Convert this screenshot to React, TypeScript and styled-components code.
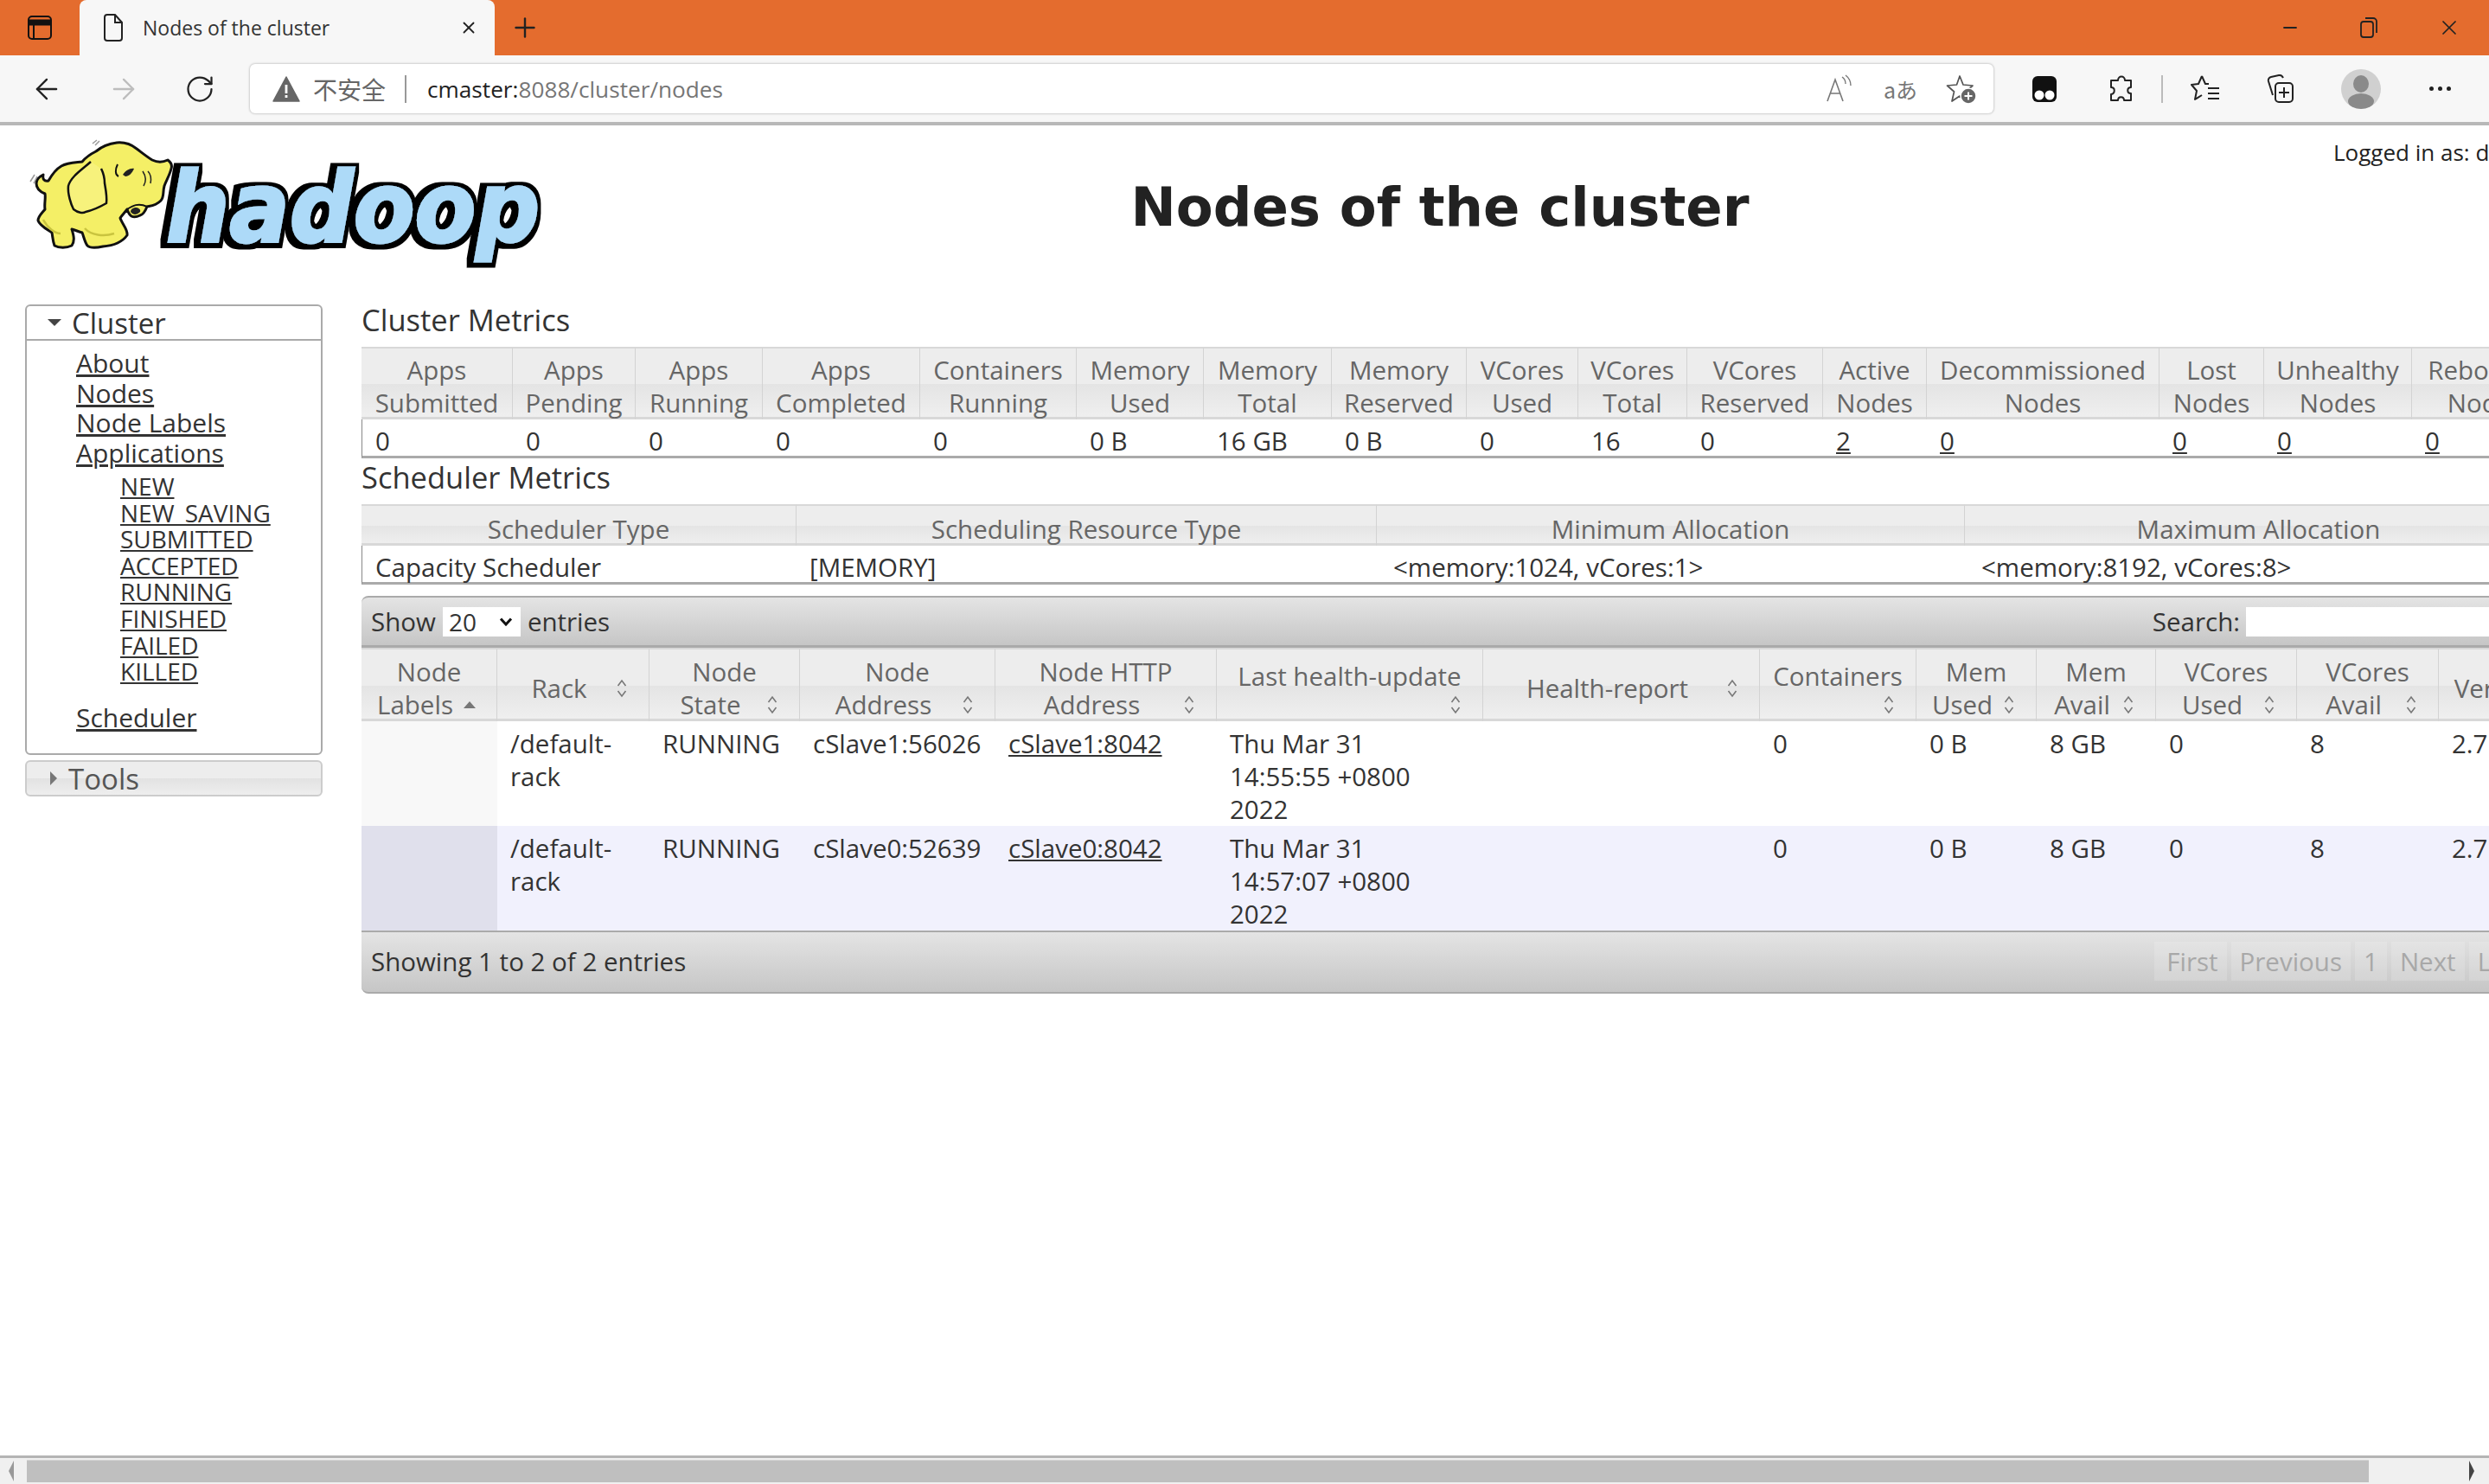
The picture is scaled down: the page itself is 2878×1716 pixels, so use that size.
import styled, { createGlobalStyle } from 'styled-components'
import { ArrowLeft, ArrowRight, RotateCw, Plus, X, Minus } from 'lucide-react'

const GlobalStyle = createGlobalStyle`
  html, body { margin: 0; padding: 0; height: 100%; overflow: hidden; background: #fff; }
  body { font-family: "Open Sans", "Noto Sans", "Noto Sans CJK SC", sans-serif; color: #333; }
  #root { height: 100%; }
  * { box-sizing: border-box; }
`

const metricHeads = [
  ['Apps', 'Submitted'], ['Apps', 'Pending'], ['Apps', 'Running'], ['Apps', 'Completed'],
  ['Containers', 'Running'], ['Memory', 'Used'], ['Memory', 'Total'], ['Memory', 'Reserved'],
  ['VCores', 'Used'], ['VCores', 'Total'], ['VCores', 'Reserved'], ['Active', 'Nodes'],
  ['Decommissioned', 'Nodes'], ['Lost', 'Nodes'], ['Unhealthy', 'Nodes'], ['Rebooted', 'Nodes'],
]
const metricWidths = [175, 142, 147, 182, 181, 147, 148, 156, 129, 126, 157, 120, 269, 121, 171, 171]
const metricValues: [string, boolean][] = [
  ['0', false], ['0', false], ['0', false], ['0', false], ['0', false], ['0 B', false], ['16 GB', false], ['0 B', false],
  ['0', false], ['16', false], ['0', false], ['2', true], ['0', true], ['0', true], ['0', true], ['0', true],
]

const schedHeads = ['Scheduler Type', 'Scheduling Resource Type', 'Minimum Allocation', 'Maximum Allocation']
const schedWidths = [503, 671, 680, 680]
const schedValues = ['Capacity Scheduler', '[MEMORY]', '<memory:1024, vCores:1>', '<memory:8192, vCores:8>']

const nodeHeads: { lines: string[]; sort: 'asc' | 'both' | 'none'; drop?: boolean }[] = [
  { lines: ['Node', 'Labels'], sort: 'asc' },
  { lines: ['Rack'], sort: 'both' },
  { lines: ['Node', 'State'], sort: 'both' },
  { lines: ['Node', 'Address'], sort: 'both' },
  { lines: ['Node HTTP', 'Address'], sort: 'both' },
  { lines: ['Last health-update'], sort: 'both', drop: true },
  { lines: ['Health-report'], sort: 'both' },
  { lines: ['Containers'], sort: 'both', drop: true },
  { lines: ['Mem', 'Used'], sort: 'both' },
  { lines: ['Mem', 'Avail'], sort: 'both' },
  { lines: ['VCores', 'Used'], sort: 'both' },
  { lines: ['VCores', 'Avail'], sort: 'both' },
  { lines: ['Version'], sort: 'none' },
]
const nodeWidths = [157, 176, 174, 226, 256, 308, 320, 181, 139, 138, 163, 164, 140]
const nodes = [
  { addr: 'cSlave1:56026', http: 'cSlave1:8042', time: '14:55:55' },
  { addr: 'cSlave0:52639', http: 'cSlave0:8042', time: '14:57:07' },
]

const appStates = ['NEW', 'NEW_SAVING', 'SUBMITTED', 'ACCEPTED', 'RUNNING', 'FINISHED', 'FAILED', 'KILLED']

function App() {
  return (
    <Screen>
      <GlobalStyle />
      <TitleBar>
        <TitleIcon>
          <svg width="30" height="30" viewBox="0 0 30 30" fill="none" stroke="#111" strokeWidth="2">
            <rect x="2" y="2" width="26" height="26" rx="4" />
            <path d="M2 9h26" strokeWidth="7" />
            <path d="M8 9v19" />
          </svg>
        </TitleIcon>
        <Tab>
          <svg width="24" height="32" viewBox="0 0 24 32" fill="none" stroke="#222" strokeWidth="2">
            <path d="M2 4a3 3 0 0 1 3-3h9l8 9v18a3 3 0 0 1-3 3H5a3 3 0 0 1-3-3z" />
            <path d="M14 1v9h8" />
          </svg>
          <TabTitle>Nodes of the cluster</TabTitle>
          <X size={22} color="#222" strokeWidth={2} />
        </Tab>
        <NewTab><Plus size={36} color="#222" strokeWidth={1.6} /></NewTab>
        <WindowControls>
          <Minus size={24} color="#222" strokeWidth={1.8} />
          <svg width="24" height="26" viewBox="0 0 24 26" fill="none" stroke="#222" strokeWidth="1.8">
            <rect x="3" y="6" width="14" height="18" rx="3" />
            <path d="M8 2h9a4 4 0 0 1 4 4v13" />
          </svg>
          <X size={28} color="#222" strokeWidth={1.5} />
        </WindowControls>
      </TitleBar>

      <Toolbar>
        <NavButtons>
          <ArrowLeft size={38} color="#222" strokeWidth={1.5} />
          <ArrowRight size={38} color="#bdbdbd" strokeWidth={1.5} />
          <RotateCw size={36} color="#222" strokeWidth={1.5} />
        </NavButtons>
        <AddressBar>
          <svg width="32" height="30" viewBox="0 0 32 30">
            <path d="M16 1 31 29H1z" fill="#666" stroke="#666" strokeLinejoin="round" strokeWidth="1.5" />
            <path d="M14.6 10h2.8v10h-2.8zM14.6 22h2.8v3h-2.8z" fill="#fff" />
          </svg>
          <Insecure>不安全</Insecure>
          <AddressDivider />
          <Url><b>cmaster:</b>8088/cluster/nodes</Url>
          <AddressIcons>
            <svg width="34" height="34" viewBox="0 0 34 34" fill="none" stroke="#777" strokeWidth="1.6">
              <path d="M2 31 11 6l9 25M5.500 22h11" />
              <path d="M19 3c3 2 4 5 4 8M23 1c4 3 6 7 6 12" strokeWidth="1.4" />
            </svg>
            <Translate>aあ</Translate>
            <svg width="36" height="36" viewBox="0 0 36 36" fill="none" stroke="#555" strokeWidth="1.7">
              <path d="M16 3l4 10 11 1-8 7 2.500 11L16 26 7 32l2.500-11-8-7 11-1z" strokeLinejoin="round" />
              <circle cx="26" cy="26" r="9" fill="#666" stroke="#fff" strokeWidth="1.5" />
              <path d="M26 21.500v9M21.500 26h9" stroke="#fff" strokeWidth="2" />
            </svg>
          </AddressIcons>
        </AddressBar>
        <Extensions>
          <svg width="28" height="30" viewBox="0 0 28 30">
            <path d="M6 0h16a6 6 0 0 1 6 6v18a6 6 0 0 1-6 6H6a6 6 0 0 1-6-6V6a6 6 0 0 1 6-6z" fill="#111" />
            <circle cx="8" cy="22" r="5.500" fill="#fff" />
            <circle cx="20" cy="22" r="5.500" fill="#fff" />
          </svg>
          <PuzzleIcon width="32" height="32" viewBox="0 0 32 32" fill="none" stroke="#222" strokeWidth="2" strokeLinejoin="round">
            <path d="M12 6c0-6 8-6 8 0h7v8c-5 0-5 7 0 7v8h-8c0-5-7-5-7 0H4v-7c5-1 5-8 0-8V6z" />
          </PuzzleIcon>
          <ToolbarDivider />
          <svg width="34" height="34" viewBox="0 0 34 34" fill="none" stroke="#222" strokeWidth="2" strokeLinejoin="round">
            <path d="M13 2l4 9h4M13 2 9 11l-8 1 6 7-2 10 8-5" />
            <path d="M20 16h13M20 22h13M20 28h13" />
          </svg>
          <svg width="34" height="34" viewBox="0 0 34 34" fill="none" stroke="#222" strokeWidth="2">
            <path d="M7 24 2 8a4 4 0 0 1 3-5l9-2a5 5 0 0 1 5 3" />
            <rect x="10" y="10" width="20" height="22" rx="4" />
            <path d="M20 15v12M14 21h12" />
          </svg>
          <Avatar>
            <svg width="46" height="46" viewBox="0 0 46 46">
              <circle cx="23" cy="23" r="23" fill="#d0d0d0" />
              <ellipse cx="23" cy="17" rx="9" ry="10" fill="#8a8a8a" />
              <ellipse cx="23" cy="37" rx="15" ry="9" fill="#8a8a8a" />
            </svg>
          </Avatar>
          <MoreDots>
            <span /><span /><span />
          </MoreDots>
        </Extensions>
      </Toolbar>

      <Page>
        <PageInner>
          <Header>
            <HadoopLogo />
            <Title>Nodes of the cluster</Title>
            <LoggedIn>Logged in as: dr.who</LoggedIn>
          </Header>

          <Main>
            <Sidebar>
              <ClusterBox>
                <PanelHead>
                  <TriangleDown />
                  Cluster
                </PanelHead>
                <NavList>
                  <li><NavLink href="#">About</NavLink></li>
                  <li><NavLink href="#">Nodes</NavLink></li>
                  <li><NavLink href="#">Node Labels</NavLink></li>
                  <li><NavLink href="#">Applications</NavLink></li>
                </NavList>
                <SubList>
                  {appStates.map(s => <li key={s}><NavLink href="#">{s}</NavLink></li>)}
                </SubList>
                <NavList>
                  <li><NavLink href="#">Scheduler</NavLink></li>
                </NavList>
              </ClusterBox>
              <ToolsBox>
                <TriangleRight />
                Tools
              </ToolsBox>
            </Sidebar>

            <Content>
              <Heading>Cluster Metrics</Heading>
              <InfoTable $width={2542}>
                <colgroup>{metricWidths.map((w, i) => <col key={i} width={w} />)}</colgroup>
                <thead>
                  <tr>{metricHeads.map((h, i) => <HeadCell key={i}>{h[0]}<br />{h[1]}</HeadCell>)}</tr>
                </thead>
                <tbody>
                  <tr>
                    {metricValues.map(([v, link], i) => <InfoCell key={i}>{link ? <PlainLink href="#">{v}</PlainLink> : v}</InfoCell>)}
                  </tr>
                </tbody>
              </InfoTable>

              <SecondHeading>Scheduler Metrics</SecondHeading>
              <InfoTable $width={2534}>
                <colgroup>{schedWidths.map((w, i) => <col key={i} width={w} />)}</colgroup>
                <thead>
                  <tr>{schedHeads.map(h => <SchedHeadCell key={h}>{h}</SchedHeadCell>)}</tr>
                </thead>
                <tbody>
                  <tr>{schedValues.map(v => <SchedCell key={v}>{v}</SchedCell>)}</tr>
                </tbody>
              </InfoTable>

              <NodesWrap>
                <TableBar $top>
                  <ShowEntries>
                    Show
                    <EntrySelect>
                      20
                      <svg width="16" height="10" viewBox="0 0 16 10" fill="none" stroke="#111" strokeWidth="3">
                        <path d="M2 1.500 8 8l6-6.500" />
                      </svg>
                    </EntrySelect>
                    entries
                  </ShowEntries>
                  <SearchBox>
                    Search:
                    <SearchInput />
                  </SearchBox>
                </TableBar>

                <NodesTable>
                  <colgroup>{nodeWidths.map((w, i) => <col key={i} width={w} />)}</colgroup>
                  <thead>
                    <tr>
                      {nodeHeads.map((h, i) => (
                        <NodeHead key={i}>
                          {h.drop ? <DroppedLine>{h.lines[0]}</DroppedLine> : h.lines[0]}
                          {h.lines[1] && <br />}{h.lines[1]}
                          {h.sort !== 'none' && <SortIcon kind={h.sort} />}
                        </NodeHead>
                      ))}
                    </tr>
                  </thead>
                  <tbody>
                    {nodes.map((n, i) => (
                      <NodeRow key={n.addr} $alt={i === 1}>
                        <LabelCell $alt={i === 1} />
                        <NodeCell>/default-<br />rack</NodeCell>
                        <NodeCell>RUNNING</NodeCell>
                        <NodeCell>{n.addr}</NodeCell>
                        <NodeCell><PlainLink href="#">{n.http}</PlainLink></NodeCell>
                        <NodeCell>Thu Mar 31<br />{n.time} +0800<br />2022</NodeCell>
                        <NodeCell />
                        <NodeCell>0</NodeCell>
                        <NodeCell>0 B</NodeCell>
                        <NodeCell>8 GB</NodeCell>
                        <NodeCell>0</NodeCell>
                        <NodeCell>8</NodeCell>
                        <NodeCell>2.7.3</NodeCell>
                      </NodeRow>
                    ))}
                  </tbody>
                </NodesTable>

                <TableBar>
                  <span>Showing 1 to 2 of 2 entries</span>
                  <Pager>
                    <PageButton>First</PageButton>
                    <PageButton>Previous</PageButton>
                    <PageButton>1</PageButton>
                    <PageButton>Next</PageButton>
                    <PageButton>Last</PageButton>
                  </Pager>
                </TableBar>
              </NodesWrap>
            </Content>
          </Main>
        </PageInner>
      </Page>

      <ScrollBar>
        <ScrollArrow viewBox="0 0 8 24"><path d="M7 0v24L1 12z" fill="#999" /></ScrollArrow>
        <ScrollThumb />
        <ScrollArrow viewBox="0 0 8 24"><path d="M1 0v24l6-12z" fill="#444" /></ScrollArrow>
      </ScrollBar>
    </Screen>
  )
}

function HadoopLogo() {
  return (
    <LogoBox>
      <svg width="620" height="160" viewBox="0 0 620 160">
        <defs>
          <filter id="logoOutline" x="-5%" y="-10%" width="110%" height="120%">
            <feMorphology in="SourceAlpha" operator="dilate" radius="6 5" result="fat" />
            <feOffset in="fat" dx="-2" dy="1" result="shifted" />
            <feFlood floodColor="#000" />
            <feComposite in2="shifted" operator="in" result="edge" />
            <feMerge>
              <feMergeNode in="edge" />
              <feMergeNode in="SourceGraphic" />
            </feMerge>
          </filter>
        </defs>
        <text
          x="172" y="127" fontFamily="'DejaVu Sans', sans-serif" fontWeight="bold" fontStyle="italic" fontSize="112"
          textLength="432" lengthAdjust="spacingAndGlyphs" fill="#ADDAF8" stroke="#ADDAF8" strokeWidth="3"
          filter="url(#logoOutline)"
        >hadoop</text>
        <path
          d="M115 13C126 12 133 16 138 20C146 26 151 30 156 33C162 36 168 36 174 33C178 36 179 40 178 43C176 51 172 57 170 63C168 70 170 76 166 80C160 86 155 86 150 87C148 92 146 96 142 97C138 99 134 99 132 98C129 96 128 93 127 90C124 94 121 97 119 100C121 107 128 113 127 120C122 127 112 132 99 133C90 135 84 135 81 132C78 128 77 122 75 117C71 116 67 114 63 113C65 120 67 126 63 132C57 135 48 135 43 132C41 127 41 122 40 117C34 113 26 109 24 103C24 98 29 94 32 90C31 84 33 77 32 72C27 70 22 66 22 60C22 55 26 52 30 50C29 55 31 58 36 57C40 50 44 44 51 40C58 36 67 36 75 35C80 29 85 26 91 23C97 18 106 14 115 13Z"
          fill="#F4EF66" stroke="#111" strokeWidth="3" strokeLinejoin="round"
        />
        <path d="M85 35C75 44 62 52 59 63C58 72 62 84 65 90C70 94 76 95 79 93C88 91 96 87 103 83C104 75 102 66 101 60C101 52 99 47 97 43" fill="#F7F27C" stroke="#111" strokeWidth="2.500" strokeLinejoin="round" />
        <path d="M127 90C133 86 140 82 150 87" fill="none" stroke="#111" strokeWidth="2" />
        <path d="M131 93C134 97 138 97 142 93C143 90 140 88 136 88C133 89 131 90 131 93Z" fill="#222" />
        <path d="M116 38C113 44 113 50 117 52" fill="none" stroke="#111" strokeWidth="2" />
        <path d="M122 50C125 45 131 42 135 43C133 48 129 52 125 52Z" fill="#222" />
        <path d="M145 46C149 52 149 58 146 63M151 46C155 50 155 55 154 60" fill="none" stroke="#222" strokeWidth="1.500" />
        <path d="M30 102C35 112 44 118 50 118M78 112C85 120 100 122 112 118" fill="none" stroke="#C9C43F" strokeWidth="2.500" />
        <path d="M90 16 95 11M87 14 92 10M15 58 20 50M19 60 23 52" stroke="#999" strokeWidth="1.500" />
      </svg>
    </LogoBox>
  )
}

function SortIcon({ kind }: { kind: 'asc' | 'both' }) {
  return (
    <SortBox>
      {kind === 'asc' ? (
        <svg width="16" height="10" viewBox="0 0 16 10"><path d="M8 1l7 8H1z" fill="#777" /></svg>
      ) : (
        <svg width="12" height="22" viewBox="0 0 12 22" fill="none" stroke="#777" strokeWidth="1.600">
          <path d="M1.500 8 6 2l4.500 6M1.500 14 6 20l4.500-6" />
        </svg>
      )}
    </SortBox>
  )
}

const Screen = styled.div`
  height: 100vh;
  display: flex;
  flex-direction: column;
  overflow: hidden;
`

const TitleBar = styled.div`
  height: 64px;
  flex: none;
  background: #e46c2e;
  display: flex;
  align-items: stretch;
`

const TitleIcon = styled.div`
  width: 92px;
  display: flex;
  align-items: center;
  justify-content: center;
`

const Tab = styled.div`
  width: 480px;
  background: #f7f7f7;
  border-radius: 8px 8px 0 0;
  display: flex;
  align-items: center;
  padding: 0 19px 0 27px;
`

const TabTitle = styled.span`
  flex: 1;
  margin-left: 22px;
  font-size: 23px;
  color: #333;
  white-space: nowrap;
`

const NewTab = styled.div`
  width: 70px;
  display: flex;
  align-items: center;
  justify-content: center;
`

const WindowControls = styled.div`
  margin-left: auto;
  width: 242px;
  padding: 0 32px 0 0;
  display: flex;
  align-items: center;
  justify-content: space-between;
`

const Toolbar = styled.div`
  height: 81px;
  flex: none;
  background: #f7f7f7;
  border-bottom: 4px solid #b8b8b8;
  display: flex;
  align-items: flex-start;
  padding-top: 10px;
`

const NavButtons = styled.div`
  width: 289px;
  height: 57px;
  padding: 0 40px 0 35px;
  display: flex;
  align-items: center;
  justify-content: space-between;
`

const AddressBar = styled.div`
  width: 2016px;
  height: 57px;
  background: #fff;
  border-radius: 6px;
  box-shadow: 0 0 2px 1px #cfcfcf;
  display: flex;
  align-items: center;
  padding: 0 19px 0 26px;
`

const Insecure = styled.span`
  margin-left: 15px;
  font-size: 28px;
  color: #666;
  font-family: "Noto Sans CJK SC", sans-serif;
`

const AddressDivider = styled.span`
  width: 2px;
  height: 32px;
  background: #999;
  margin: 0 24px 0 22px;
`

const Url = styled.span`
  font-size: 26.200px;
  color: #767676;
  white-space: nowrap;
  & > b {
    font-weight: 400;
    color: #222;
  }
`

const AddressIcons = styled.div`
  margin-left: auto;
  display: flex;
  align-items: center;
  gap: 33px;
`

const Translate = styled.span`
  font-size: 25px;
  color: #777;
  font-family: "Noto Sans CJK SC", sans-serif;
`

const Extensions = styled.div`
  flex: 1;
  height: 57px;
  display: flex;
  align-items: center;
  padding-left: 45px;
  gap: 54px;
`

const PuzzleIcon = styled.svg`
  margin-left: 5px;
`

const ToolbarDivider = styled.span`
  width: 2px;
  height: 32px;
  background: #bbb;
  margin: 0 -22px 0 -24px;
`

const Avatar = styled.div`
  display: flex;
  margin-left: -2px;
`

const MoreDots = styled.div`
  display: flex;
  gap: 5px;
  margin-left: 2px;
  & > span {
    width: 5px;
    height: 5px;
    border-radius: 50%;
    background: #222;
  }
`

const Page = styled.div`
  flex: 1;
  overflow: hidden;
  background: #fff;
`

const PageInner = styled.div`
  width: 3030px;
`

const Header = styled.div`
  height: 207px;
  display: grid;
  grid-template-columns: 640px 2050px 1fr;
`

const LogoBox = styled.div`
  padding: 7px 0 0 20px;
  & > svg { display: block; }
`

const Title = styled.h1`
  margin: 0;
  text-align: center;
  font-family: "DejaVu Sans", sans-serif;
  font-weight: 700;
  font-size: 62.500px;
  line-height: 190px;
  color: #222;
  white-space: nowrap;
`

const LoggedIn = styled.div`
  padding: 14px 0 0 8px;
  font-size: 26px;
  line-height: 34px;
  color: #222;
  white-space: nowrap;
`

const Main = styled.div`
  display: flex;
  align-items: flex-start;
  padding-left: 29px;
`

const Sidebar = styled.div`
  width: 344px;
  flex: none;
  display: flex;
  flex-direction: column;
  gap: 6px;
`

const ClusterBox = styled.div`
  height: 521px;
  border: 2px solid #aaa;
  border-radius: 6px;
`

const PanelHead = styled.div`
  height: 40px;
  border-bottom: 2px solid #aaa;
  display: flex;
  align-items: center;
  padding-left: 24px;
  font-size: 33px;
  color: #333;
`

const TriangleDown = styled.span`
  width: 0;
  height: 0;
  border: 8px solid transparent;
  border-top: 8px solid #444;
  border-bottom: 0;
  margin-right: 12px;
`

const TriangleRight = styled.span`
  width: 0;
  height: 0;
  border: 8px solid transparent;
  border-left: 8px solid #777;
  border-right: 0;
  margin-right: 13px;
`

const ToolsBox = styled.div`
  height: 42px;
  border: 2px solid #ccc;
  border-radius: 6px;
  background: linear-gradient(#ededed 0 50%, #e2e2e2 50%, #eee 100%);
  display: flex;
  align-items: center;
  padding-left: 27px;
  font-size: 33px;
  color: #555;
`

const NavList = styled.ul`
  list-style: none;
  margin: 0;
  padding: 9px 0 0 57px;
  font-size: 30px;
  line-height: 34.500px;
`

const SubList = styled.ul`
  list-style: none;
  margin: 0;
  padding: 6px 0 12px 108px;
  font-size: 28px;
  line-height: 30.600px;
`

const NavLink = styled.a`
  display: inline-block;
  vertical-align: top;
  color: #333;
  text-decoration: underline;
`

const PlainLink = styled.a`
  color: #333;
  text-decoration: underline;
`

const Content = styled.div`
  margin-left: 45px;
  width: 2542px;
  flex: none;
`

const Heading = styled.h3`
  margin: 0;
  height: 49px;
  font-size: 34.500px;
  font-weight: 400;
  line-height: 36px;
  color: #333;
`

const SecondHeading = styled(Heading)`
  height: 53px;
  line-height: 44px;
`

const InfoTable = styled.table<{ $width: number }>`
  width: ${({ $width }) => $width}px;
  table-layout: fixed;
  border-collapse: separate;
  border-spacing: 0;
  font-size: 29.500px;
  line-height: 38px;
`

const HeadCell = styled.th`
  height: 84px;
  padding: 6px 0 0;
  font-weight: 400;
  color: #666;
  text-align: center;
  white-space: nowrap;
  background: linear-gradient(#ededed 0 50%, #e4e4e4 50%, #f0f0f0 100%);
  border-top: 2px solid #d8d8d8;
  border-right: 1px solid #d3d3d3;
  box-shadow: inset 0 -3px 0 #d8d8d8;
`

const SchedHeadCell = styled(HeadCell)`
  height: 48px;
  padding-top: 7px;
`

const InfoCell = styled.td`
  height: 45px;
  padding: 8px 0 0 15px;
  line-height: 30px;
  color: #333;
  white-space: nowrap;
  border-bottom: 3px solid #aaa;
  &:first-child { border-left: 1px solid #888; }
`

const SchedCell = styled(InfoCell)`
  &:nth-child(n + 3) { padding-left: 19px; }
`

const NodesWrap = styled.div`
  margin-top: 13px;
`

const TableBar = styled.div<{ $top?: boolean }>`
  height: ${({ $top }) => ($top ? '60px' : '73px')};
  background: linear-gradient(#e4e4e4, #c6c6c6);
  border: 1px solid #aaa;
  border-width: ${({ $top }) => ($top ? '2px 0 3px 0' : '2px 0 2px 0')};
  border-radius: ${({ $top }) => ($top ? '8px 0 0 0' : '0 0 0 8px')};
  display: flex;
  align-items: center;
  justify-content: space-between;
  padding-left: 11px;
  padding-bottom: ${({ $top }) => ($top ? '0' : '2px')};
  font-size: 29.500px;
  color: #333;
  white-space: nowrap;
`

const ShowEntries = styled.div`
  display: flex;
  align-items: center;
  gap: 8px;
`

const EntrySelect = styled.div`
  width: 90px;
  height: 34px;
  background: #fff;
  display: flex;
  align-items: center;
  justify-content: space-between;
  padding: 0 9px 0 7px;
  font-size: 28px;
`

const SearchBox = styled.div`
  display: flex;
  align-items: center;
  gap: 7px;
`

const SearchInput = styled.div`
  width: 363px;
  height: 34px;
  background: #fff;
`

const NodesTable = styled.table`
  width: 2542px;
  table-layout: fixed;
  border-collapse: separate;
  border-spacing: 0;
  font-size: 29.500px;
  line-height: 38px;
`

const NodeHead = styled.th`
  height: 85px;
  padding: 6px 15px 0;
  font-weight: 400;
  color: #666;
  text-align: center;
  white-space: nowrap;
  background: linear-gradient(#ededed 0 50%, #e4e4e4 50%, #f0f0f0 100%);
  border-top: 2px solid #d8d8d8;
  border-right: 1px solid #d3d3d3;
  box-shadow: inset 0 -3px 0 #d8d8d8;
`

const DroppedLine = styled.span`
  display: block;
  margin: 5px 0 -5px;
`

const SortBox = styled.span`
  float: right;
  width: 32px;
  height: 38px;
  display: flex;
  align-items: center;
  justify-content: center;
`

const NodeRow = styled.tr<{ $alt: boolean }>`
  background: ${({ $alt }) => ($alt ? '#f1f1fd' : '#fff')};
`

const NodeCell = styled.td`
  height: 120px;
  padding: 7px 0 0 15px;
  vertical-align: top;
  color: #333;
  white-space: nowrap;
`

const LabelCell = styled(NodeCell)<{ $alt: boolean }>`
  background: ${({ $alt }) => ($alt ? '#e0e0ec' : '#f8f8f8')};
`

const Pager = styled.div`
  display: flex;
  gap: 5px;
  margin-right: 29px;
  align-self: center;
`

const PageButton = styled.span`
  height: 45px;
  padding: 0 10px;
  display: flex;
  align-items: center;
  background: rgba(255, 255, 255, 0.16);
  color: #a8a8a8;
  &:first-child { padding-left: 14px; }
`

const ScrollBar = styled.div`
  height: 33px;
  flex: none;
  background: #f0f0f0;
  border-top: 3px solid #b4b4b4;
  display: flex;
  align-items: center;
  justify-content: space-between;
  padding: 0 16px 0 9px;
`

const ScrollArrow = styled.svg`
  width: 8px;
  height: 24px;
  flex: none;
`

const ScrollThumb = styled.div`
  height: 26px;
  width: 2708px;
  margin: 0 auto 0 14px;
  background: #bfbfbf;
  border-top: 1px solid #d5d5d5;
`

export default App
